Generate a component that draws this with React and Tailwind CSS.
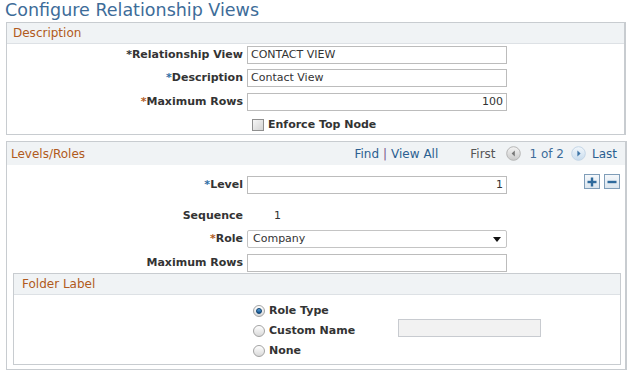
import React from 'react';

const font = { fontFamily: '"DejaVu Sans", Verdana, sans-serif' };

function Req({ color }) {
  return <span className={color}>*</span>;
}

function Field({ label, req, children, className = '' }) {
  return (
    <div className={`flex items-center h-[18px] ${className}`}>
      <div className="w-[240px] pr-[4px] text-right text-[11px] font-bold text-[#333] whitespace-nowrap">
        {req}
        {label}
      </div>
      {children}
    </div>
  );
}

function TextBox({ value = '', right = false, w = 'w-[260px]', disabled = false }) {
  return (
    <div
      className={`${w} h-[18px] border border-[#bcbcbc] px-[3px] text-[11px] leading-[16px] text-[#333] ${
        right ? 'text-right' : ''
      } ${disabled ? 'bg-[#f2f2f2] border-[#c8cbd0]' : 'bg-white'}`}
    >
      {value}
    </div>
  );
}

function SectionHeader({ children, className = '' }) {
  return (
    <div className={`h-[21px] bg-[#f0f3f5] border-b border-[#dde1e5] flex items-center text-[12px] text-[#b05a20] ${className}`}>
      {children}
    </div>
  );
}

function Radio({ checked }) {
  return (
    <span className="w-[12px] h-[12px] rounded-full border border-[#a3a3a3] bg-gradient-to-b from-[#ffffff] to-[#d9d9d9] flex items-center justify-center shrink-0">
      {checked && <span className="w-[6px] h-[6px] rounded-full bg-gradient-to-b from-[#5ba6e0] to-[#0d4f8a] border border-[#0b3f6e]" />}
    </span>
  );
}

function NavCircle({ dir }) {
  const prev = dir === 'prev';
  return (
    <svg width="15" height="15" viewBox="0 0 15 15">
      <defs>
        <linearGradient id={`g-${dir}`} x1="0" y1="0" x2="0" y2="1">
          <stop offset="0" stopColor={prev ? '#f4f4f4' : '#f2f7fb'} />
          <stop offset="1" stopColor={prev ? '#c9c9c9' : '#c8dcee'} />
        </linearGradient>
      </defs>
      <circle cx="7.5" cy="7.5" r="6.8" fill={`url(#g-${dir})`} stroke={prev ? '#b5b5b5' : '#c3d5e6'} />
      {prev ? (
        <polygon points="8.8,4.5 5.6,7.5 8.8,10.5" fill="#777" />
      ) : (
        <polygon points="6.4,4.5 9.6,7.5 6.4,10.5" fill="#3d74a6" />
      )}
    </svg>
  );
}

function SquareBtn({ minus }) {
  return (
    <div className="w-[16px] h-[15px] border border-[#7f9db8] bg-gradient-to-b from-[#f5f8fb] to-[#dbe5ee] flex items-center justify-center">
      <svg width="10" height="10" viewBox="0 0 10 10">
        <rect x="0.5" y="3.8" width="9" height="2.4" fill="#2f6a9c" />
        {!minus && <rect x="3.8" y="0.5" width="2.4" height="9" fill="#2f6a9c" />}
      </svg>
    </div>
  );
}

export default function App() {
  return (
    <div className="w-[637px] h-[380px] bg-white relative overflow-hidden" style={font}>
      <h1 className="pl-[5px] h-[23px] text-[17.5px] leading-[23px] text-[#3d6c99] -mt-[1px]">Configure Relationship Views</h1>

      {/* Description */}
      <div className="ml-[6px] w-[620px] h-[113px] border border-r-2 border-[#c8ccd0]">
        <SectionHeader className="pl-[6px]">Description</SectionHeader>
        <div className="pt-[2px]">
          <Field label="Relationship View" req={<Req color="text-[#333]" />}>
            <TextBox value="CONTACT VIEW" />
          </Field>
          <Field label="Description" req={<Req color="text-[#2f6ea5]" />} className="mt-[5px]">
            <TextBox value="Contact View" />
          </Field>
          <Field label="Maximum Rows" req={<Req color="text-[#b35c1e]" />} className="mt-[6px]">
            <TextBox value="100" right />
          </Field>
          <div className="flex items-center h-[16px] mt-[6px] pl-[245px]">
            <span className="w-[12px] h-[12px] border border-[#8f8f8f] bg-gradient-to-br from-[#f7f7f7] to-[#d3d3d3]" />
            <span className="ml-[4px] text-[11px] font-bold text-[#333]">Enforce Top Node</span>
          </div>
        </div>
      </div>

      {/* Levels/Roles */}
      <div className="ml-[6px] mt-[6px] w-[621px] h-[229px] border border-r-2 border-[#c8ccd0]">
        <div className="h-[23px] bg-[#f0f3f5] flex items-center text-[12px]">
          <span className="pl-[4px] text-[#b05a20]">Levels/Roles</span>
          <span className="ml-auto text-[#2b5f91]">Find</span>
          <span className="mx-[4px] text-[#7a5a8a]">|</span>
          <span className="text-[#2b5f91]">View All</span>
          <span className="ml-[32px] text-[#555]">First</span>
          <span className="ml-[10px] flex"><NavCircle dir="prev" /></span>
          <span className="ml-[9px] text-[#3d6c99]">1 of 2</span>
          <span className="ml-[7px] flex"><NavCircle dir="next" /></span>
          <span className="ml-[6px] mr-[8px] text-[#2b5f91]">Last</span>
        </div>

        <div className="pt-[11px]">
          <div className="flex items-start">
            <Field label="Level" req={<Req color="text-[#2f6ea5]" />}>
              <TextBox value="1" right />
            </Field>
            <div className="ml-auto mr-[5px] -mt-[2px] flex gap-[4px]">
              <SquareBtn />
              <SquareBtn minus />
            </div>
          </div>
          <Field label="Sequence" className="mt-[13px]">
            <span className="ml-[27px] text-[11px] text-[#333]">1</span>
          </Field>
          <Field label="Role" req={<Req color="text-[#b35c1e]" />} className="mt-[5px]">
            <div className="w-[260px] h-[18px] border border-[#c4c4c4] rounded-[2px] bg-white flex items-center px-[5px] text-[11px] text-[#333]">
              Company
              <svg className="ml-auto" width="8" height="5" viewBox="0 0 8 5">
                <polygon points="0,0 8,0 4,5" fill="#111" />
              </svg>
            </div>
          </Field>
          <Field label="Maximum Rows" className="mt-[6px]">
            <TextBox />
          </Field>

          {/* Folder Label */}
          <div className="ml-[6px] mt-[1px] w-[608px] h-[92px] border border-[#c8ccd0]">
            <SectionHeader className="pl-[8px]">Folder Label</SectionHeader>
            <div className="pt-[6px] pl-[239px]">
              <div className="flex items-center h-[20px]">
                <Radio checked />
                <span className="ml-[4px] text-[11px] font-bold text-[#333]">Role Type</span>
              </div>
              <div className="flex items-center h-[20px]">
                <Radio />
                <span className="ml-[4px] w-[129px] text-[11px] font-bold text-[#333]">Custom Name</span>
                <div className="self-start -mt-[2px]">
                  <TextBox w="w-[143px]" disabled />
                </div>
              </div>
              <div className="flex items-center h-[20px]">
                <Radio />
                <span className="ml-[4px] text-[11px] font-bold text-[#333]">None</span>
              </div>
            </div>
          </div>
        </div>
      </div>
    </div>
  );
}
